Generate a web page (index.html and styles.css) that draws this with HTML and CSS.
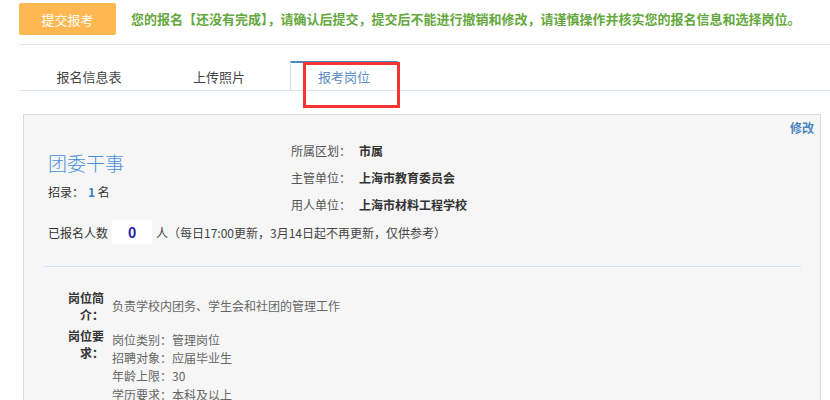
FILE: index.html
```html
<!DOCTYPE html>
<html lang="zh-CN">
<head>
<meta charset="utf-8">
<title>报考岗位</title>
<link rel="stylesheet" href="styles.css">
</head>
<body>
<div class="top">
  <button class="submit">提交报考</button>
  <div class="notice">您的报名【还没有完成】，请确认后提交，提交后不能进行撤销和修改，请谨慎操作并核实您的报名信息和选择岗位。</div>
</div>
<div class="sep"></div>
<div class="tabs">
  <div class="tab tab1">报名信息表</div>
  <div class="tab tab2">上传照片</div>
  <div class="tab tab3 active">报考岗位</div>
</div>
<div class="highlight"></div>
<div class="panel">
  <div class="edit">修改</div>
  <div class="head">
    <div class="left">
      <div class="title">团委干事</div>
      <div class="quota">招录：<b class="num">1</b> 名</div>
    </div>
    <div class="right">
      <div class="info"><span class="lbl">所属区划：</span><span class="val">市属</span></div>
      <div class="info"><span class="lbl">主管单位：</span><span class="val">上海市教育委员会</span></div>
      <div class="info"><span class="lbl">用人单位：</span><span class="val">上海市材料工程学校</span></div>
    </div>
  </div>
  <div class="count">
    <span>已报名人数</span>
    <span class="box">0</span>
    <span class="note">人（每日17:00更新，3月14日起不再更新，仅供参考）</span>
  </div>
  <div class="divider"></div>
  <div class="details">
    <div class="row row1">
      <div class="dlabel">岗位简介：</div>
      <div class="dval">负责学校内团务、学生会和社团的管理工作</div>
    </div>
    <div class="row row2">
      <div class="dlabel">岗位要求：</div>
      <div class="dval req">
        <div>岗位类别：管理岗位</div>
        <div>招聘对象：应届毕业生</div>
        <div>年龄上限：30</div>
        <div>学历要求：本科及以上</div>
      </div>
    </div>
  </div>
</div>
</body>
</html>
```
FILE: styles.css
```css
html, body {
  margin: 0;
  padding: 0;
  background: #fff;
}
body {
  position: relative;
  font-family: "Noto Sans CJK SC", "Noto Sans", sans-serif;
  font-size: 12px;
  color: #333;
  overflow: hidden;
}
.top {
  display: flex;
  align-items: center;
  padding: 3px 0 0 19px;
}
.submit {
  width: 97px;
  height: 32px;
  border: 0;
  border-radius: 2px;
  background: #ffb751;
  color: #fff;
  font-family: inherit;
  font-size: 13px;
  padding: 0;
}
.notice {
  margin-left: 15px;
  font-size: 13px;
  font-weight: bold;
  color: #64a83d;
  line-height: 32px;
  white-space: nowrap;
}
.sep {
  margin: 9px 0 0 19px;
  border-top: 1px solid #e5e5e5;
}
.tabs {
  display: flex;
  margin-left: 19px;
  padding-top: 16px;
  border-bottom: 1px solid #dde7ef;
}
.tab {
  width: 108px;
  height: 27px;
  line-height: 27px;
  text-align: center;
  font-size: 13px;
  color: #444;
  border-top: 2px solid transparent;
  box-sizing: content-box;
}
.tab1 { margin-left: 16px; }
.tab2 { margin-left: 22px; }
.tab3 { margin-left: 17px; }
.tab.active {
  width: 106px;
  border-top-color: #4a8bc4;
  border-left: 1px solid #d3e2ee;
  border-right: 1px solid #d3e2ee;
  color: #5a8bc4;
  background: #fff;
}
.highlight {
  position: absolute;
  left: 303px;
  top: 62px;
  width: 91px;
  height: 40px;
  border: 3px solid #f83333;
}
.panel {
  margin: 23px 9px 0 23px;
  background: #f6f6f6;
  border: 1px solid #dcdcdc;
  height: 400px;
}
.edit {
  text-align: right;
  padding-right: 6px;
  margin-top: 4px;
  line-height: 18px;
  color: #4a86c0;
  font-weight: bold;
}
.head {
  display: flex;
  padding-left: 24px;
}
.left {
  width: 243px;
}
.title {
  margin-top: 13px;
  font-size: 19px;
  line-height: 26px;
  color: #4a90d9;
  font-weight: 300;
}
.quota {
  margin-top: 7px;
  line-height: 18px;
}
.num {
  color: #3a7fc0;
  margin-left: 4px;
}
.info {
  line-height: 27px;
}
.lbl {
  display: inline-block;
  width: 68px;
  color: #555;
}
.val {
  font-weight: bold;
  color: #333;
}
.count {
  display: flex;
  align-items: center;
  padding-left: 24px;
  margin-top: 2px;
  height: 24px;
}
.box {
  width: 40px;
  height: 24px;
  line-height: 24px;
  margin: 0 4px;
  background: #fff;
  text-align: center;
  font-size: 14px;
  font-weight: bold;
  color: #1f22a8;
}
.note {
  color: #444;
}
.divider {
  margin: 22px 19px 0 20px;
  border-top: 1px solid #cfe2f3;
}
.details {
  padding-left: 44px;
  padding-top: 22px;
}
.row {
  display: flex;
}
.row1 {
  align-items: center;
}
.row2 {
  margin-top: 4px;
  align-items: flex-start;
}
.dlabel {
  width: 36px;
  text-align: right;
  font-weight: bold;
  line-height: 17px;
  color: #333;
}
.dval {
  margin-left: 8px;
  line-height: 18.4px;
  color: #666;
}
.req {
  padding-top: 3.5px;
}
```
